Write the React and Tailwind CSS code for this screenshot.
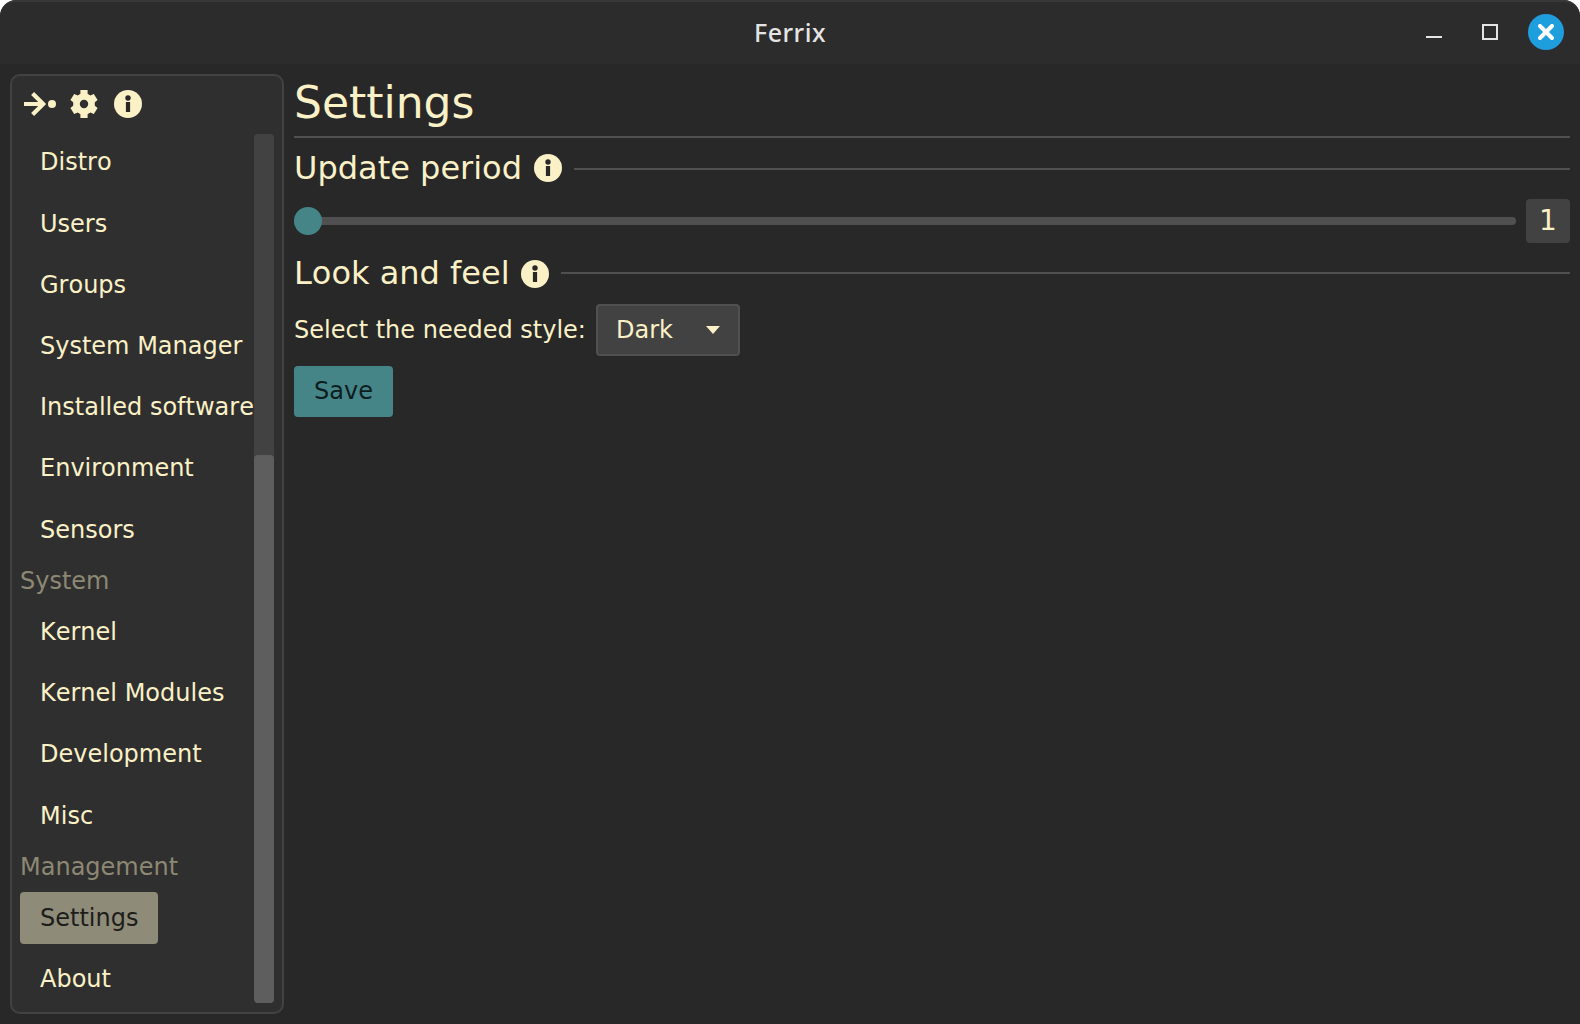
const Info = () => (
  <svg className="h-7 w-7 shrink-0" viewBox="0 0 28 28">
    <circle cx="14" cy="14" r="14" fill="#fbf1c7" />
    <circle cx="14" cy="8" r="2.7" fill="#282828" />
    <rect x="11.9" y="12" width="4.2" height="10" fill="#282828" />
  </svg>
);

const Arrow = () => (
  <svg className="h-7 w-8" viewBox="0 0 32 28">
    <path d="M0 14H19M8.6 3.4L19.2 14L8.6 24.6" fill="none" stroke="#fbf1c7" strokeWidth="4.2" />
    <circle cx="28" cy="14" r="4" fill="#fbf1c7" />
  </svg>
);

const Gear = () => (
  <svg className="h-7 w-7" viewBox="0 0 28 28" fill="#fbf1c7">
    <path
      fillRule="evenodd"
      d="M10.4 0h7.2v3.8l2.7 1.6 3.5-1.5 3.8 6.1-2.8 2.2v3.6l2.8 2.2-3.8 6.1-3.5-1.5-2.7 1.6V28h-7.2v-3.8l-2.7-1.6-3.5 1.5L.4 18l2.8-2.2v-3.6L.4 10l3.8-6.1 3.5 1.5 2.7-1.6zM14 9.8a4.2 4.2 0 1 0 0 8.4a4.2 4.2 0 1 0 0-8.4z"
    />
  </svg>
);

const groups = [
  { items: ["Distro", "Users", "Groups", "System Manager", "Installed software", "Environment", "Sensors"] },
  { title: "System", items: ["Kernel", "Kernel Modules", "Development", "Misc"] },
  { title: "Management", items: ["Settings", "About"] },
];

function Sidebar() {
  return (
    <aside className="flex h-[940px] w-[274px] shrink-0 flex-col rounded-[10px] border-2 border-[#424242] bg-[#2f2f2f] px-2 pb-[9px]">
      <div className="mb-[2px] flex h-[56px] shrink-0 items-center gap-[14px] pl-1">
        <Arrow />
        <Gear />
        <div className="ml-0.5"><Info /></div>
      </div>
      <div className="flex min-h-0 flex-1">
        <nav className="flex w-[234px] flex-col items-start gap-[10px] pt-[3.4px] leading-[31.2px] [font-kerning:none]">
          {groups.map((g, i) => (
            <div key={i} className="flex flex-col items-start gap-[10px]">
              {g.title && <div className="text-[#8d8873]">{g.title}</div>}
              {g.items.map((t) => (
                <button
                  key={t}
                  className={
                    t === "Settings"
                      ? "-mt-[0.6px] rounded-[4px] bg-[#8f8b79] px-5 pt-[10.6px] pb-[10px] whitespace-nowrap text-[#1d1d1b]"
                      : "px-5 py-[10px] whitespace-nowrap"
                  }
                >
                  {t}
                </button>
              ))}
            </div>
          ))}
        </nav>
        <div className="flex w-5 shrink-0 flex-col justify-end rounded-[4px] bg-[#424242]">
          <div className="h-[548px] rounded-[4px] bg-[#5e5e5e]" />
        </div>
      </div>
    </aside>
  );
}

function Section({ title, titleClass, iconClass }) {
  return (
    <div className="flex h-[42px] items-center">
      <h2 className={`shrink-0 text-[32px] leading-[42px] whitespace-nowrap ${titleClass}`}>{title}</h2>
      <div className={`ml-3 ${iconClass}`}><Info /></div>
      <div className="ml-3 h-0.5 flex-1 bg-[#505050]" />
    </div>
  );
}

export default function App() {
  return (
    <div className="h-[1024px] w-[1580px] bg-white">
      <div className="flex h-full w-full flex-col overflow-hidden rounded-t-[16px] bg-[#282828] font-['DejaVu_Sans',sans-serif] text-[24px] text-[#fbf1c7] [font-kerning:none]">
        <header className="grid h-16 shrink-0 grid-cols-[1fr_auto_1fr] items-center rounded-t-[16px] border-t-2 border-[#383838] bg-[#2c2c2c]">
          <div />
          <div className="font-['Noto_Sans',sans-serif] text-[25px] font-medium tracking-[0.5px] text-[#e4e4e4]">Ferrix</div>
          <div className="mb-0.5 flex items-center justify-end pr-4">
            <div className="mt-[10px] mr-10 h-0.5 w-4 bg-[#e4e4e4]" />
            <div className="mr-[30px] h-4 w-4 border-2 border-[#e4e4e4]" />
            <div className="flex h-9 w-9 items-center justify-center rounded-full bg-[#1f9ede]">
              <svg className="h-4 w-4" viewBox="0 0 16 16" fill="none" stroke="white" strokeWidth="4" strokeLinecap="round">
                <path d="M2 2L14 14M14 2L2 14" />
              </svg>
            </div>
          </div>
        </header>
        <div className="flex flex-1 gap-[10px] p-[10px]">
          <Sidebar />
          <main className="flex min-w-0 flex-1 flex-col">
            <h1 className="h-[62px] text-[44px] leading-[57px]">Settings</h1>
            <div className="mb-[10px] h-0.5 shrink-0 bg-[#505050]" />
            <Section title="Update period" titleClass="mb-0.5 w-[228px]" iconClass="mb-0.5" />
            <div className="mt-[9px] flex h-11 items-center gap-[10px]">
              <div className="flex h-2 flex-1 items-center rounded-full bg-[#505050]">
                <div className="h-7 w-7 rounded-full bg-[#458588]" />
              </div>
              <div className="flex h-11 w-11 items-center justify-center rounded-[4px] bg-[#424242] text-[28px]">1</div>
            </div>
            <div className="mt-[9px]">
              <Section title="Look and feel" titleClass="w-[215px]" iconClass="mt-0.5" />
            </div>
            <div className="mt-[10px] flex items-center gap-[10px]">
              <span>Select the needed style:</span>
              <button className="flex h-[52px] w-36 items-center justify-between rounded-[4px] border-2 border-[#505050] bg-[#424242] pr-[18px] pl-[18px]">
                Dark
                <svg className="h-2 w-[14px]" viewBox="0 0 14 8" fill="#fbf1c7"><path d="M0 0H14L7 8Z" /></svg>
              </button>
            </div>
            <button className="mt-[10px] h-[51px] w-[99px] self-start rounded-[4px] bg-[#458588] pb-0.5 text-[#0c1e1f]">Save</button>
          </main>
        </div>
      </div>
    </div>
  );
}
